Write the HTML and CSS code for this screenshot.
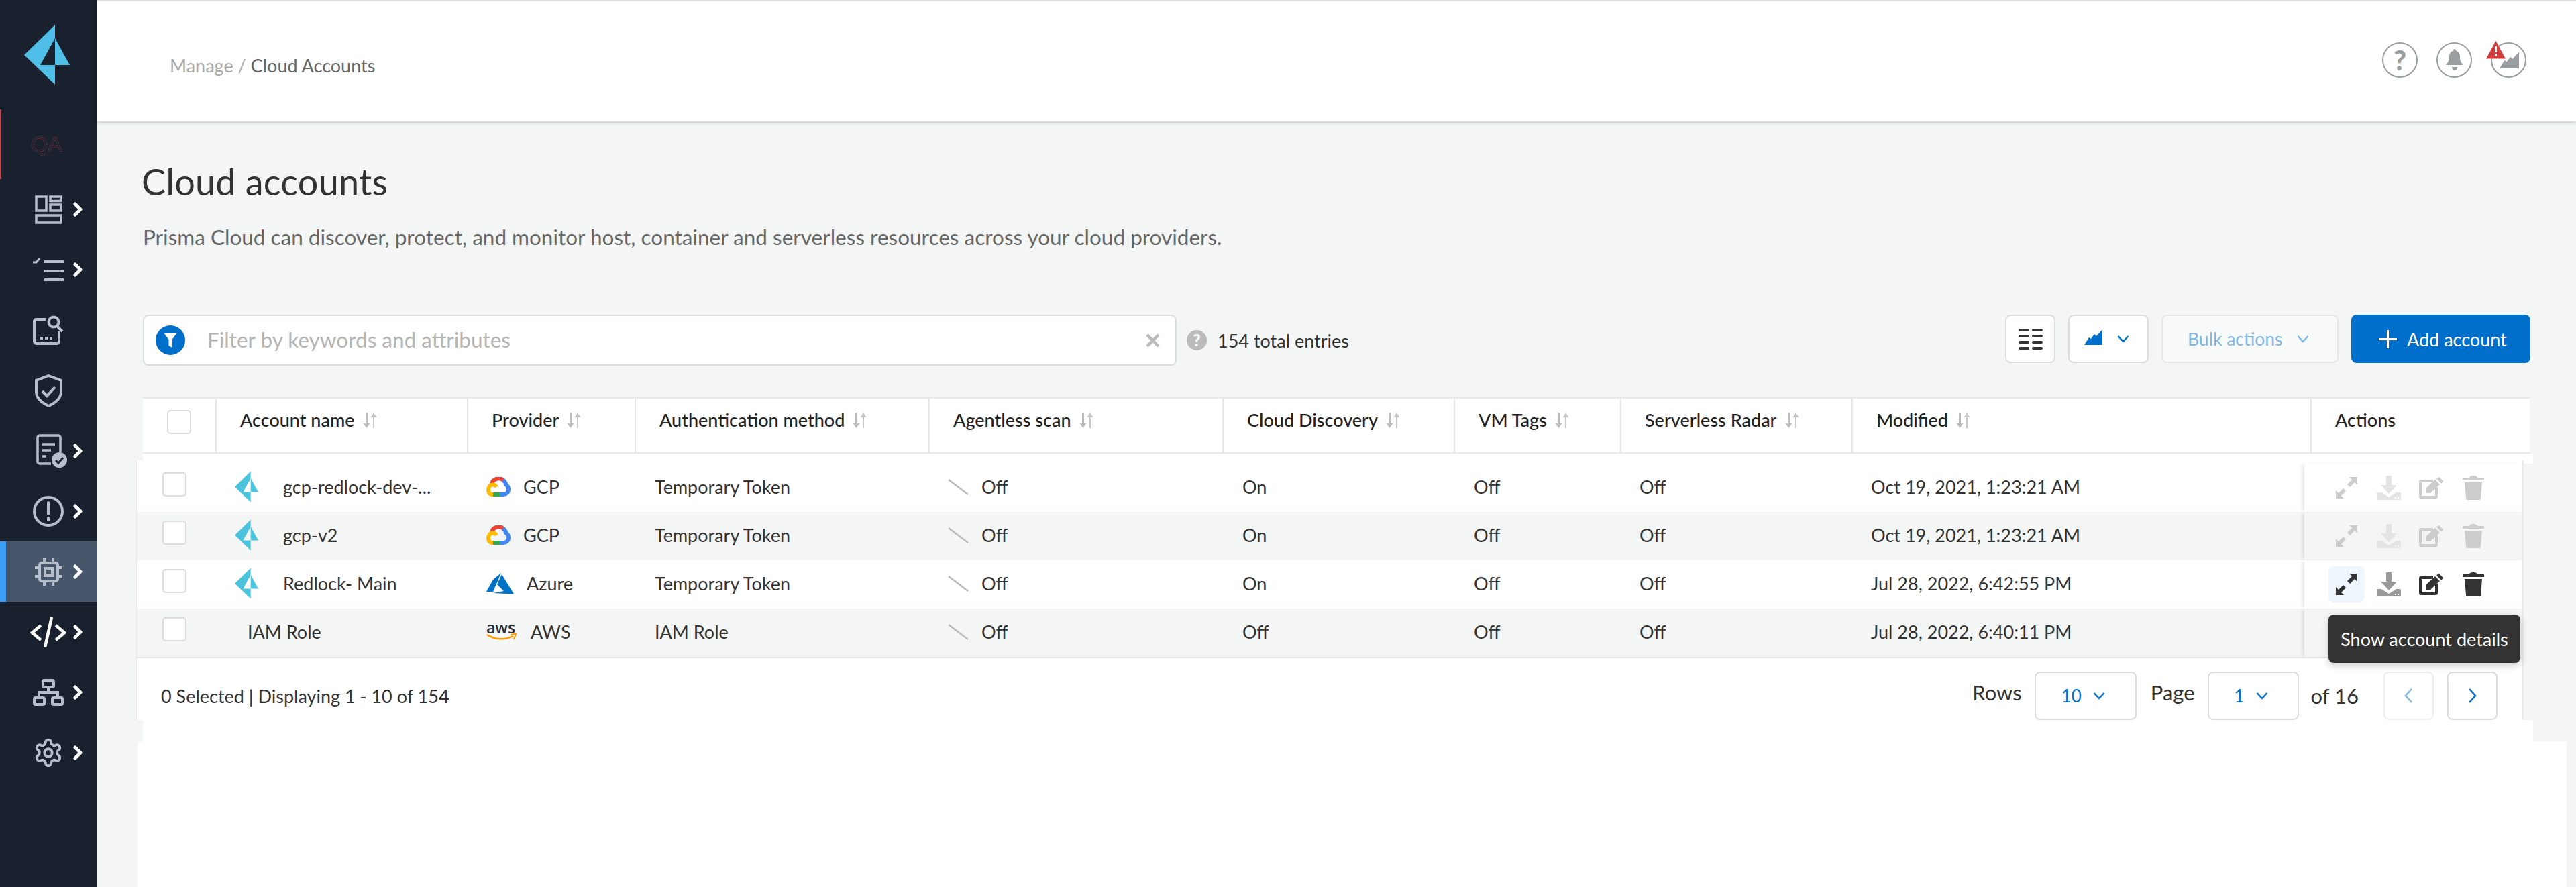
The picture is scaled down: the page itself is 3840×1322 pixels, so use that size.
FILE: index.html
```html
<!DOCTYPE html>
<html>
<head>
    <meta charset="utf-8">
    <link rel="stylesheet" href="styles.css">
    <title>Cloud accounts</title>
</head>
<body>
    <!-- shared icons -->
    <svg class="sprites" width="0" height="0">
        <symbol id="i-logo" viewBox="0 0 68 89"><path d="M46 0 0 45l46 44V60H24L46 20z"/><path d="M46 20l22 40H46z"/></symbol>
        <symbol id="i-next" viewBox="0 0 15 22"><path d="M3 3l8 8-8 8" fill="none" stroke="#fff" stroke-width="5" stroke-linecap="round" stroke-linejoin="round"/></symbol>
        <symbol id="i-down" viewBox="0 0 18 12"><path d="M1.5 2l7.5 8 7.5-8" fill="none" stroke="currentColor" stroke-width="2.5"/></symbol>
        <symbol id="i-peak" viewBox="0 0 27 24"><path d="M0 24l7-11 3 2 5-7 3 3 9-10v23z"/></symbol>
        <symbol id="i-sort" viewBox="0 0 20 24"><path d="M3 0h3v16h3.5l-5 7-5-7H3z" fill="#bdbdbd"/><path d="M15 0l4.5 7H16v16h-2V7h-3.5z" fill="#c8c8c8"/></symbol>
        <symbol id="i-off" viewBox="0 0 31 24"><path d="M1 1l29 22" stroke="#bbb" stroke-width="2.5" fill="none"/></symbol>
        <symbol id="i-gcp" viewBox="0 0 36 29">
            <path d="M8 10.5A10.5 10.5 0 0 1 27 7" fill="none" stroke="#ea4335" stroke-width="6"/>
            <path d="M25 4.5C28 7 29 9 29.5 11.5 32 13 33 16 33 18.5 33 23 29.5 26 26 26H19" fill="none" stroke="#4285f4" stroke-width="6"/>
            <path d="M8 26h12" fill="none" stroke="#34a853" stroke-width="6"/>
            <path d="M10 26H8.5C5 26 3 22.5 3 19S5.5 11.5 9.5 11.5c2.5 0 4.5 1.5 5.5 3.5" fill="none" stroke="#fbbc05" stroke-width="6"/>
        </symbol>
        <symbol id="i-expand" viewBox="0 0 32 32"><path d="M20 0h12v12l-4-4-7 7-4-4 7-7zM12 32H0V20l4 4 7-7 4 4-7 7z"/></symbol>
        <symbol id="i-save" viewBox="0 0 36 36"><path d="M14 0h8v14h8L18 27 6 14h8z"/><path fill-rule="evenodd" d="M2 25h5l11 7 11-7h5a2 2 0 0 1 2 2v7a2 2 0 0 1-2 2H2a2 2 0 0 1-2-2v-7a2 2 0 0 1 2-2zM27 32v2h2v-2zM31 32v2h2v-2z"/></symbol>
        <symbol id="i-edit" viewBox="0 0 36 32"><path d="M21 6H3a1 1 0 0 0-1 1v22a1 1 0 0 0 1 1h22a1 1 0 0 0 1-1V15" fill="none" stroke="currentColor" stroke-width="4"/><path d="M10 24v-7L24 4l7 7-14 13zM26 2.5 28.5.5a1.5 1.5 0 0 1 2 0l5 5a1.5 1.5 0 0 1 0 2L33 9.5z"/></symbol>
        <symbol id="i-trash" viewBox="0 0 32 36"><path d="M10 3c0-2 3-3 6-3s6 1 6 3h9a1 1 0 0 1 1 1v3H0V4a1 1 0 0 1 1-1z"/><path d="M3 10h26l-2 24a2 2 0 0 1-2 2H7a2 2 0 0 1-2-2z"/></symbol>
    </svg>

    <aside class="sidebar">
        <div class="brand"><svg class="brand-logo"><use href="#i-logo"/></svg></div>
        <div class="env">
            <svg width="54" height="42" viewBox="0 0 54 42"><text class="env-text" x="1" y="32">QA</text></svg>
        </div>
        <nav class="nav">
            <a class="nav-item" href="#">
                <span class="nav-icon"><svg width="41" height="43" viewBox="0 0 41 43" fill="none" stroke="#b6bdcb" stroke-width="3.5"><rect x="2" y="2" width="15" height="21"/><rect x="23" y="2" width="16" height="6.5"/><rect x="23" y="14" width="16" height="9"/><rect x="2" y="30" width="37" height="11"/></svg></span>
                <svg class="nav-next"><use href="#i-next"/></svg>
            </a>
            <a class="nav-item" href="#">
                <span class="nav-icon"><svg width="46" height="36" viewBox="0 0 46 36" fill="none" stroke="#b6bdcb" stroke-width="4"><path d="M17 6h29M17 20h29M17 33h29"/><path d="M0 7h5l5-6" stroke-width="3"/></svg></span>
                <svg class="nav-next"><use href="#i-next"/></svg>
            </a>
            <a class="nav-item" href="#">
                <span class="nav-icon"><svg width="46" height="44" viewBox="0 0 46 44" fill="none" stroke="#b6bdcb" stroke-width="4"><path d="M20 6H5a3 3 0 0 0-3 3v30a3 3 0 0 0 3 3h31a3 3 0 0 0 3-3V24"/><circle cx="31" cy="10" r="7.5"/><path d="M36 16l8 8"/><path d="M11 34h4M18 34h4M25 34h4"/></svg></span>
            </a>
            <a class="nav-item" href="#">
                <span class="nav-icon"><svg width="41" height="49" viewBox="0 0 41 49" fill="none" stroke="#b6bdcb" stroke-width="4"><path d="M20.5 2 39 9v17c0 10-8 16-18.5 21C10 42 2 36 2 26V9z"/><path d="M11 25l7 7 12-13"/></svg></span>
            </a>
            <a class="nav-item" href="#">
                <span class="nav-icon nav-icon-doc"><svg width="46" height="50" viewBox="0 0 46 50" fill="none" stroke="#b6bdcb" stroke-width="3.5"><path d="M22 44H5a3 3 0 0 1-3-3V5a3 3 0 0 1 3-3h28a3 3 0 0 1 3 3v22"/><path d="M9 15h19M9 24h13M9 33h6"/><circle cx="34.5" cy="38.5" r="11.5" fill="#b6bdcb" stroke="none"/><path d="M29 39l4 4 7-8" stroke="#19202e" stroke-width="3"/></svg></span>
                <svg class="nav-next"><use href="#i-next"/></svg>
            </a>
            <a class="nav-item" href="#">
                <span class="nav-icon"><svg width="46" height="46" viewBox="0 0 46 46" fill="none" stroke="#b6bdcb" stroke-width="4"><circle cx="23" cy="23" r="21"/><path d="M23 10v17" stroke-linecap="round"/><path d="M23 33v3" stroke-linecap="round"/></svg></span>
                <svg class="nav-next"><use href="#i-next"/></svg>
            </a>
            <a class="nav-item nav-item-active" href="#">
                <span class="nav-icon"><svg width="41" height="41" viewBox="0 0 41 41" fill="none" stroke="#b6bdcb" stroke-width="4"><rect x="7" y="7" width="27" height="27" rx="3"/><rect x="15" y="15" width="11" height="11"/><path d="M14 0v6M27 0v6M14 35v6M27 35v6M0 14h6M0 27h6M35 14h6M35 27h6"/></svg></span>
                <svg class="nav-next"><use href="#i-next"/></svg>
            </a>
            <a class="nav-item" href="#">
                <span class="nav-icon"><svg width="54" height="47" viewBox="0 0 54 47" fill="none" stroke="#fff" stroke-width="4.5"><path d="M16 13 3 24l13 11M38 13l13 11-13 11M32 1l-10 45"/></svg></span>
                <svg class="nav-next"><use href="#i-next"/></svg>
            </a>
            <a class="nav-item" href="#">
                <span class="nav-icon"><svg width="46" height="40" viewBox="0 0 46 40" fill="none" stroke="#b6bdcb" stroke-width="4"><rect x="15" y="2" width="16" height="10" rx="2"/><rect x="2" y="28" width="15" height="10" rx="2"/><rect x="29" y="28" width="15" height="10" rx="2"/><path d="M23 12v8M9 28v-8h28v8"/></svg></span>
                <svg class="nav-next"><use href="#i-next"/></svg>
            </a>
            <a class="nav-item" href="#">
                <span class="nav-icon"><svg width="46" height="46" viewBox="0 0 24 24" fill="none" stroke="#b6bdcb" stroke-width="2"><path d="M12.22 2h-.44a2 2 0 0 0-2 2v.18a2 2 0 0 1-1 1.73l-.43.25a2 2 0 0 1-2 0l-.15-.08a2 2 0 0 0-2.73.73l-.22.38a2 2 0 0 0 .73 2.73l.15.1a2 2 0 0 1 1 1.72v.51a2 2 0 0 1-1 1.74l-.15.09a2 2 0 0 0-.73 2.73l.22.38a2 2 0 0 0 2.73.73l.15-.08a2 2 0 0 1 2 0l.43.25a2 2 0 0 1 1 1.73V20a2 2 0 0 0 2 2h.44a2 2 0 0 0 2-2v-.18a2 2 0 0 1 1-1.73l.43-.25a2 2 0 0 1 2 0l.15.08a2 2 0 0 0 2.73-.73l.22-.39a2 2 0 0 0-.73-2.73l-.15-.08a2 2 0 0 1-1-1.74v-.5a2 2 0 0 1 1-1.74l.15-.09a2 2 0 0 0 .73-2.73l-.22-.38a2 2 0 0 0-2.73-.73l-.15.08a2 2 0 0 1-2 0l-.43-.25a2 2 0 0 1-1-1.73V4a2 2 0 0 0-2-2z"/><circle cx="12" cy="12" r="3"/></svg></span>
                <svg class="nav-next"><use href="#i-next"/></svg>
            </a>
        </nav>
    </aside>

    <main class="main">
        <header class="topbar">
            <div class="crumbs"><span class="crumb-root">Manage / </span><span class="crumb-now">Cloud Accounts</span></div>
            <div class="top-icons">
                <span class="round-icon"><span class="round-mark">?</span></span>
                <span class="round-icon">
                    <svg width="26" height="32" viewBox="0 0 26 32" fill="#999ea0"><path d="M13 0c1.5 0 2 1 2 2.5 4 1.5 6 5 6 9 0 5 1 8 5 12.5H0c4-4.500 5-7.500 5-12.500 0-4 2-7.500 6-9C11 1 11.5 0 13 0z"/><path d="M9 27h8c0 3-1.5 5-4 5s-4-2-4-5z"/></svg>
                </span>
                <span class="round-icon round-icon-alert">
                    <svg class="peak-grey" width="29" height="26"><use href="#i-peak"/></svg>
                    <svg class="alert-badge" width="29" height="27" viewBox="0 0 29 27"><path d="M14.5 0 29 26.5H0z" fill="#d13c3c"/><path d="M13 8h3v9h-3zM13 19h3v3.5h-3z" fill="#fff"/></svg>
                </span>
            </div>
        </header>

        <div class="page">
            <h1 class="title">Cloud accounts</h1>
            <p class="intro">Prisma Cloud can discover, protect, and monitor host, container and serverless resources across your cloud providers.</p>

            <div class="toolbar">
                <div class="search">
                    <span class="search-filter"><svg width="22" height="24" viewBox="0 0 22 24" fill="#fff"><path d="M1 1h20l-7.5 10v12l-5-3v-9z"/></svg></span>
                    <span class="search-hint">Filter by keywords and attributes</span>
                    <svg class="search-clear" width="21" height="21" viewBox="0 0 21 21"><path d="M2 2l17 17M19 2 2 19" stroke="#bbb" stroke-width="4.5" fill="none"/></svg>
                </div>
                <span class="entries-help">?</span>
                <span class="entries">154 total entries</span>
                <div class="toolbar-actions">
                    <button class="btn btn-icon"><svg width="36" height="31" viewBox="0 0 36 31" fill="#333"><rect width="16" height="4" rx="2"/><rect x="20" width="16" height="4" rx="2"/><rect y="9" width="16" height="4" rx="2"/><rect x="20" y="9" width="16" height="4" rx="2"/><rect y="18" width="16" height="4" rx="2"/><rect x="20" y="18" width="16" height="4" rx="2"/><rect y="27" width="16" height="4" rx="2"/><rect x="20" y="27" width="16" height="4" rx="2"/></svg></button>
                    <button class="btn btn-cloud"><svg class="peak-blue" width="27" height="24"><use href="#i-peak"/></svg><svg class="chev" width="18" height="12"><use href="#i-down"/></svg></button>
                    <button class="btn btn-bulk">Bulk actions<svg class="chev" width="18" height="12"><use href="#i-down"/></svg></button>
                    <button class="btn btn-add"><svg width="27" height="27" viewBox="0 0 27 27"><path d="M13.5 0v27M0 13.5h27" stroke="#fff" stroke-width="3" fill="none"/></svg>Add account</button>
                </div>
            </div>

            <div class="table-head">
                <div class="th th-check"><span class="checkbox"></span></div>
                <div class="th">Account name<svg class="sort"><use href="#i-sort"/></svg></div>
                <div class="th">Provider<svg class="sort"><use href="#i-sort"/></svg></div>
                <div class="th">Authentication method<svg class="sort"><use href="#i-sort"/></svg></div>
                <div class="th">Agentless scan<svg class="sort"><use href="#i-sort"/></svg></div>
                <div class="th">Cloud Discovery<svg class="sort"><use href="#i-sort"/></svg></div>
                <div class="th">VM Tags<svg class="sort"><use href="#i-sort"/></svg></div>
                <div class="th">Serverless Radar<svg class="sort"><use href="#i-sort"/></svg></div>
                <div class="th">Modified<svg class="sort"><use href="#i-sort"/></svg></div>
                <div class="th">Actions</div>
            </div>
            <div class="head-gap"></div>

            <div class="table-body">
                <div class="row">
                    <div class="td-check"><span class="checkbox"></span></div>
                    <div class="td td-name"><svg class="row-logo"><use href="#i-logo"/></svg>gcp-redlock-dev-...</div>
                    <div class="td"><svg class="prov-icon" width="36" height="29"><use href="#i-gcp"/></svg>GCP</div>
                    <div class="td">Temporary Token</div>
                    <div class="td"><svg class="off-icon" width="31" height="24"><use href="#i-off"/></svg>Off</div>
                    <div class="td">On</div>
                    <div class="td">Off</div>
                    <div class="td">Off</div>
                    <div class="td">Oct 19, 2021, 1:23:21 AM</div>
                    <div class="td-actions actions-off">
                        <span class="act act-main"><svg width="32" height="32"><use href="#i-expand"/></svg></span>
                        <span class="act act-save"><svg width="36" height="36"><use href="#i-save"/></svg></span>
                        <span class="act act-main"><svg width="36" height="32"><use href="#i-edit"/></svg></span>
                        <span class="act act-main"><svg width="32" height="36"><use href="#i-trash"/></svg></span>
                    </div>
                </div>
                <div class="row row-alt">
                    <div class="td-check"><span class="checkbox"></span></div>
                    <div class="td td-name"><svg class="row-logo"><use href="#i-logo"/></svg>gcp-v2</div>
                    <div class="td"><svg class="prov-icon" width="36" height="29"><use href="#i-gcp"/></svg>GCP</div>
                    <div class="td">Temporary Token</div>
                    <div class="td"><svg class="off-icon" width="31" height="24"><use href="#i-off"/></svg>Off</div>
                    <div class="td">On</div>
                    <div class="td">Off</div>
                    <div class="td">Off</div>
                    <div class="td">Oct 19, 2021, 1:23:21 AM</div>
                    <div class="td-actions actions-off">
                        <span class="act act-main"><svg width="32" height="32"><use href="#i-expand"/></svg></span>
                        <span class="act act-save"><svg width="36" height="36"><use href="#i-save"/></svg></span>
                        <span class="act act-main"><svg width="36" height="32"><use href="#i-edit"/></svg></span>
                        <span class="act act-main"><svg width="32" height="36"><use href="#i-trash"/></svg></span>
                    </div>
                </div>
                <div class="row">
                    <div class="td-check"><span class="checkbox"></span></div>
                    <div class="td td-name"><svg class="row-logo"><use href="#i-logo"/></svg>Redlock- Main</div>
                    <div class="td">
                        <svg class="prov-icon" width="41" height="32" viewBox="0 0 41 32" fill="#0072c6"><path d="M22 0 10 10 0 28h10z"/><path d="M23 2 16 17l10 10-16 3 31 1.5z"/></svg>Azure
                    </div>
                    <div class="td">Temporary Token</div>
                    <div class="td"><svg class="off-icon" width="31" height="24"><use href="#i-off"/></svg>Off</div>
                    <div class="td">On</div>
                    <div class="td">Off</div>
                    <div class="td">Off</div>
                    <div class="td">Jul 28, 2022, 6:42:55 PM</div>
                    <div class="td-actions actions-on">
                        <span class="act act-main act-hover"><svg width="32" height="32"><use href="#i-expand"/></svg></span>
                        <span class="act act-save"><svg width="36" height="36"><use href="#i-save"/></svg></span>
                        <span class="act act-main"><svg width="36" height="32"><use href="#i-edit"/></svg></span>
                        <span class="act act-main"><svg width="32" height="36"><use href="#i-trash"/></svg></span>
                        <div class="tooltip">Show account details</div>
                    </div>
                </div>
                <div class="row row-alt">
                    <div class="td-check"><span class="checkbox"></span></div>
                    <div class="td td-iam">IAM Role</div>
                    <div class="td">
                        <span class="aws-mark">
                            <span class="aws-word">aws</span>
                            <svg width="46" height="13" viewBox="0 0 46 13"><path d="M1 2c12 8 27 8 39 2" fill="none" stroke="#f90" stroke-width="2.5"/><path d="M36 2l8-1-3 8" fill="none" stroke="#f90" stroke-width="2"/></svg>
                        </span>AWS
                    </div>
                    <div class="td">IAM Role</div>
                    <div class="td"><svg class="off-icon" width="31" height="24"><use href="#i-off"/></svg>Off</div>
                    <div class="td">Off</div>
                    <div class="td">Off</div>
                    <div class="td">Off</div>
                    <div class="td">Jul 28, 2022, 6:40:11 PM</div>
                    <div class="td-actions"></div>
                </div>

                <div class="table-foot">
                    <span class="foot-count">0 Selected | Displaying 1 - 10 of 154</span>
                    <div class="pager">
                        <span class="pager-label">Rows</span>
                        <span class="pager-select pager-rows">10<svg class="chev" width="18" height="12"><use href="#i-down"/></svg></span>
                        <span class="pager-label pager-label-page">Page</span>
                        <span class="pager-select pager-page">1<svg class="chev" width="18" height="12"><use href="#i-down"/></svg></span>
                        <span class="pager-of">of 16</span>
                        <span class="pager-btn pager-prev"><svg width="13" height="24" viewBox="0 0 13 24"><path d="M11 2 2 12l9 10" fill="none" stroke="currentColor" stroke-width="2.5"/></svg></span>
                        <span class="pager-btn"><svg width="13" height="24" viewBox="0 0 13 24"><path d="M2 2l9 10-9 10" fill="none" stroke="currentColor" stroke-width="2.5"/></svg></span>
                    </div>
                </div>
            </div>

            <div class="sheet-step"></div>
            <div class="sheet"></div>
        </div>
    </main>
</body>
</html>
```

FILE: styles.css
```css
* {
    box-sizing: border-box;
}

html, body {
    height: 100%;
}

body {
    margin: 0;
    display: flex;
    overflow: hidden;
    background-color: #f4f6f5;
    color: #333;
    font-family: Lato, "Open Sans", sans-serif;
    font-size: 27px;
}

.sprites {
    position: absolute;
}

/* sidebar */
.sidebar {
    width: 144px;
    flex: none;
    background-color: #19202e;
}

.brand {
    height: 163px;
    display: flex;
    align-items: center;
    justify-content: center;
    padding-right: 4px;
}

.brand-logo {
    width: 68px;
    height: 89px;
    fill: #4fbfe8;
}

.env {
    height: 104px;
    border-left: 2px solid #c8474c;
    display: flex;
    align-items: center;
    padding-left: 43px;
}

.env-text {
    font-family: "Liberation Sans", sans-serif;
    font-size: 32px;
    fill: none;
    stroke: #d0454a;
    stroke-width: 0.6;
    stroke-dasharray: 1 1.2;
}

.nav-item {
    height: 90px;
    display: flex;
    align-items: center;
    padding-left: 42px;
    text-decoration: none;
}

.nav-item-active {
    background-color: #47566a;
    border-left: 9px solid #3ba0f5;
    padding-left: 33px;
}

.nav-icon {
    width: 60px;
    display: flex;
    justify-content: center;
}

.nav-icon-doc {
    padding-left: 9px;
}

.nav-next {
    width: 15px;
    height: 22px;
    margin-left: 7px;
}

/* top bar */
.main {
    flex: 1;
    min-width: 0;
    display: flex;
    flex-direction: column;
}

.topbar {
    height: 181px;
    flex: none;
    display: flex;
    align-items: center;
    justify-content: space-between;
    padding: 0 74px 0 109px;
    background-color: #fff;
    border-top: 2px solid #dfe0e0;
    box-shadow: 0 2px 5px rgba(0, 0, 0, 0.18);
    position: relative;
}

.crumbs {
    font-size: 27px;
    margin-top: 11px;
}

.crumb-root {
    color: #a8a8a8;
}

.crumb-now {
    color: #666;
}

.top-icons {
    display: flex;
    gap: 28px;
    margin-bottom: 5px;
}

.round-icon {
    width: 53px;
    height: 53px;
    border: 2px solid #999ea0;
    border-radius: 50%;
    display: flex;
    align-items: center;
    justify-content: center;
    background-color: #fff;
}

.round-mark {
    color: #999ea0;
    font-size: 41px;
    font-weight: 900;
    line-height: 1;
}

.round-icon-alert {
    position: relative;
}

.peak-grey {
    fill: #999ea0;
    margin-left: 2px;
}

.alert-badge {
    position: absolute;
    left: -9px;
    top: -4px;
}

/* page */
.page {
    flex: 1;
    display: flex;
    flex-direction: column;
    padding: 58px 0 0 69px;
    min-height: 0;
}

.title {
    margin: 0 0 0 -2px;
    font-size: 54px;
    font-weight: 400;
    letter-spacing: 0.2px;
    line-height: 64px;
    color: #333;
}

.intro {
    margin: 30px 0 0;
    font-size: 31.5px;
    line-height: 40px;
    color: #666;
}

.toolbar {
    display: flex;
    align-items: center;
    width: 3559px;
    height: 76px;
    margin-top: 96px;
    flex: none;
}

.search {
    width: 1541px;
    height: 76px;
    display: flex;
    align-items: center;
    background-color: #fff;
    border: 2px solid #dcdcdc;
    border-radius: 8px;
    padding: 0 23px 0 17px;
}

.search-filter {
    width: 44px;
    height: 44px;
    border-radius: 50%;
    background-color: #006fcc;
    display: flex;
    align-items: center;
    justify-content: center;
}

.search-hint {
    flex: 1;
    margin: 0 0 3px 33px;
    color: #b5b5b5;
    font-size: 31.5px;
}

.entries-help {
    width: 30px;
    height: 30px;
    margin-left: 15px;
    border-radius: 50%;
    background-color: #bbb;
    color: #fff;
    font-size: 24px;
    font-weight: 900;
    line-height: 30px;
    text-align: center;
}

.entries {
    margin-left: 16px;
}

.toolbar-actions {
    margin-left: auto;
    display: flex;
    gap: 19px;
    align-self: flex-start;
}

.btn {
    height: 72px;
    border: 2px solid #dcdcdc;
    border-radius: 8px;
    background-color: #fff;
    font-family: inherit;
    font-size: 26.5px;
    display: flex;
    align-items: center;
    padding: 0;
}

.btn-icon {
    width: 75px;
    justify-content: center;
}

.btn-cloud {
    width: 120px;
    padding-left: 22px;
    gap: 22px;
    color: #006fcc;
}

.peak-blue {
    fill: #006fcc;
    margin-top: -6px;
}

.btn-bulk {
    width: 264px;
    padding-left: 37px;
    gap: 21px;
    color: #7fb6e6;
    background-color: #f8fafa;
    border-color: #e8e8e8;
}

.btn-add {
    width: 267px;
    padding-left: 39px;
    gap: 15px;
    font-size: 27px;
    color: #fff;
    background-color: #006fcc;
    border-color: #006fcc;
}

.chev {
    flex: none;
}

/* table */
.table-head {
    display: grid;
    grid-template-columns: 108px 375px 250px 438px 438px 345px 248px 345px 684px 327px;
    width: 3558px;
    height: 84px;
    margin-top: 47px;
    flex: none;
    background-color: #fff;
    border-top: 2px solid #e8e8e8;
    border-bottom: 2px solid #e8e8e8;
}

.th {
    display: flex;
    align-items: flex-start;
    padding: 15px 0 0 35px;
    font-weight: 500;
    font-size: 27px;
    line-height: 34px;
    color: #222;
    border-left: 2px solid #e8e8e8;
}

.th-check {
    padding: 17px 0 0 36px;
    border-left: 0;
}

.sort {
    width: 20px;
    height: 24px;
    margin: 6px 0 0 13px;
}

.head-gap {
    width: 3563px;
    height: 15px;
    flex: none;
    background-color: #fff;
}

.table-body {
    width: 3560px;
    margin: -5px 0 0 -11px;
    padding-top: 5px;
    flex: none;
    background-color: #fff;
    border-left: 2px solid #ebebeb;
    border-right: 2px solid #ebebeb;
    position: relative;
}

.row {
    display: grid;
    grid-template-columns: 146px 375px 251px 437px 439px 345px 247px 345px 646px 1fr;
    height: 72px;
    align-items: center;
}

.row-alt {
    background-color: #f4f6f5;
}

.checkbox {
    display: block;
    width: 36px;
    height: 36px;
    background-color: #fff;
    border: 2px solid #dcdcdc;
    border-radius: 5px;
}

.td-check {
    align-self: start;
    padding: 13px 0 0 38px;
}

.td {
    display: flex;
    align-items: center;
    padding-bottom: 3px;
    line-height: 34px;
    white-space: nowrap;
}

.td-iam {
    padding-left: 19px;
}

.row-logo {
    width: 35px;
    height: 47px;
    margin-right: 37px;
    fill: #4cc3dd;
}

.prov-icon {
    margin-right: 19px;
    flex: none;
}

.aws-mark {
    width: 46px;
    margin-right: 20px;
    display: flex;
    flex-direction: column;
}

.aws-word {
    font-family: "Open Sans", sans-serif;
    font-size: 23px;
    font-weight: 600;
    line-height: 18px;
    color: #252f3e;
}

.off-icon {
    margin-right: 19px;
}

.td-actions {
    height: 72px;
    display: flex;
    align-items: center;
    gap: 9px;
    padding-left: 36px;
    box-shadow: -5px 0 5px -2px rgba(0, 0, 0, 0.1);
    position: relative;
}

.act {
    width: 54px;
    height: 54px;
    border-radius: 8px;
    display: flex;
    align-items: center;
    justify-content: center;
}

.actions-off .act-main {
    color: #ccc;
    fill: #ccc;
}

.actions-off .act-save {
    color: #e4e4e4;
    fill: #e4e4e4;
}

.actions-on .act-main {
    color: #333;
    fill: #333;
}

.actions-on .act-save {
    fill: #999;
}

.act-hover {
    background-color: #eff6fd;
}

.tooltip {
    position: absolute;
    left: 36px;
    top: 81px;
    width: 286px;
    height: 72px;
    display: flex;
    align-items: center;
    justify-content: center;
    border-radius: 8px;
    background-color: #333;
    color: #fff;
    box-shadow: 0 4px 12px rgba(0, 0, 0, 0.2);
    z-index: 2;
}

.table-foot {
    height: 94px;
    border-top: 2px solid #e8e8e8;
    display: flex;
    align-items: center;
    justify-content: space-between;
    padding: 20px 37px 0 36px;
}

.pager {
    display: flex;
    align-items: center;
    font-size: 31px;
}

.pager-label {
    margin: 0 19px 10px 0;
}

.pager-label-page {
    margin-left: 21px;
}

.pager-select {
    height: 72px;
    border: 2px solid #dcdcdc;
    border-radius: 8px;
    display: flex;
    align-items: center;
    gap: 17px;
    padding-left: 38px;
    font-size: 26px;
    color: #006fcc;
}

.pager-rows {
    width: 152px;
}

.pager-page {
    width: 136px;
}

.pager-of {
    margin: 0 37px 0 18px;
}

.pager-btn {
    width: 75px;
    height: 72px;
    border: 2px solid #dcdcdc;
    border-radius: 8px;
    display: flex;
    align-items: center;
    justify-content: center;
    color: #006fcc;
}

.pager-prev {
    margin-right: 20px;
    color: #7fb6e6;
    border-color: #eeeeee;
}

.sheet-step {
    width: 3563px;
    height: 32px;
    flex: none;
    background-color: #fff;
}

.sheet {
    flex: 1;
    width: 3621px;
    margin-left: -8px;
    background-color: #fff;
}
```
